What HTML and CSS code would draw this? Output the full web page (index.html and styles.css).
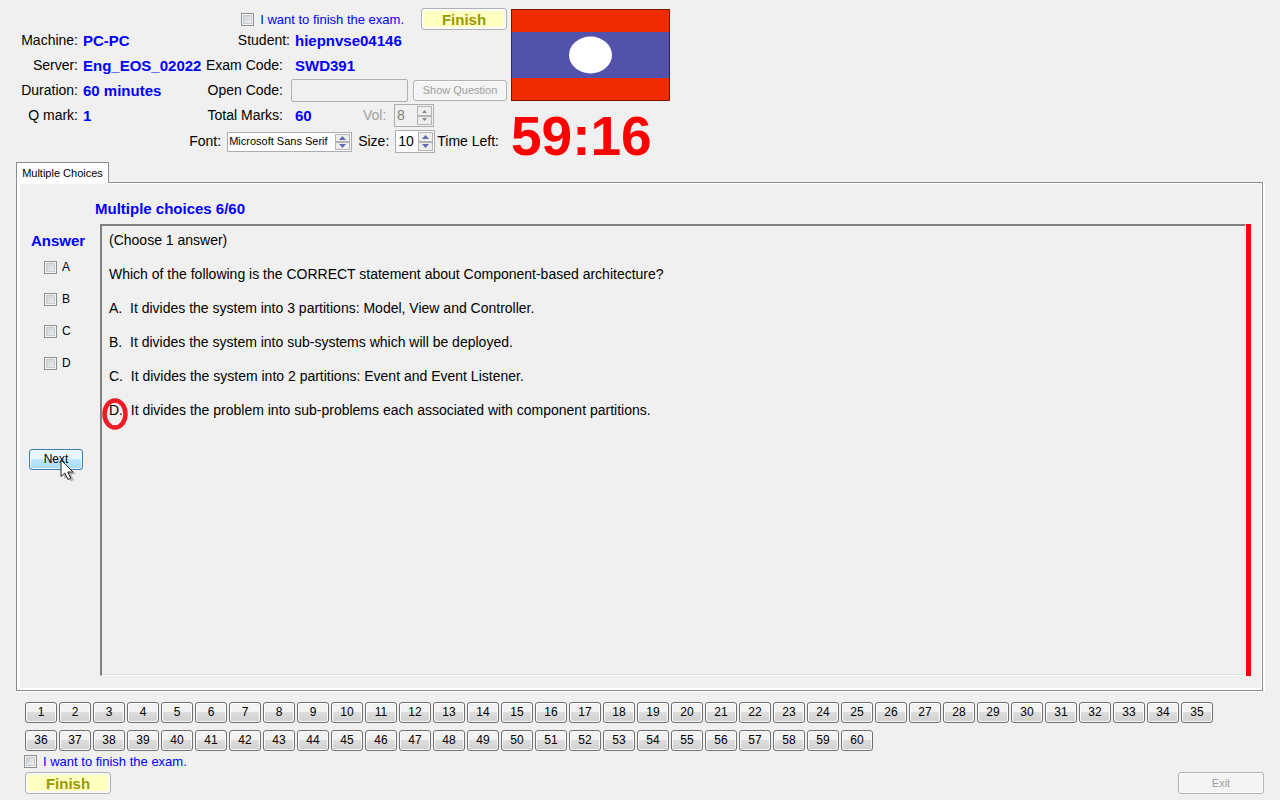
FILE: index.html
```html
<!DOCTYPE html>
<html lang="en">
<head>
<meta charset="utf-8">
<title>Exam</title>
<link rel="stylesheet" href="styles.css">
</head>
<body>
<header class="header">
  <div class="info">
    <div class="finish-line">
      <label class="confirm"><input class="check" type="checkbox"><span>I want to finish the exam.</span></label>
      <button class="btn btn-finish" type="button">Finish</button>
    </div>
    <div class="details">
      <span class="label">Machine:</span><span class="value">PC-PC</span>
      <span class="label">Student:</span><span class="value">hiepnvse04146</span>
      <span class="label">Server:</span><span class="value">Eng_EOS_02022</span>
      <span class="label label-inset">Exam Code:</span><span class="value">SWD391</span>
      <span class="label">Duration:</span><span class="value">60 minutes</span>
      <label class="label label-inset" for="open-code">Open Code:</label>
      <div class="open-code"><input class="code-input" id="open-code" type="text" disabled><button class="btn btn-show" type="button" disabled>Show Question</button></div>
      <span class="label">Q mark:</span><span class="value">1</span>
      <span class="label label-inset">Total Marks:</span>
      <div class="marks">
        <span class="value">60</span>
        <label class="muted" for="volume">Vol:</label>
        <div class="spinner spinner-off"><input id="volume" type="number" value="8" disabled><span class="steps"><button type="button" aria-label="Volume up" disabled><svg viewBox="0 0 7 4"><path d="M1 4L3.500 1L6 4Z"/></svg></button><button type="button" aria-label="Volume down" disabled><svg viewBox="0 0 7 4"><path d="M1 0L3.500 3L6 0Z"/></svg></button></span></div>
      </div>
    </div>
    <div class="font-line">
      <label for="font">Font:</label>
      <div class="spinner spinner-font"><input id="font" type="text" value="Microsoft Sans Serif"><span class="steps"><button type="button" aria-label="Previous font"><svg viewBox="0 0 7 4"><path d="M0 4L3.500 0L7 4Z"/></svg></button><button type="button" aria-label="Next font"><svg viewBox="0 0 7 4"><path d="M0 0L3.500 4L7 0Z"/></svg></button></span></div>
      <label for="size">Size:</label>
      <div class="spinner"><input id="size" type="number" value="10"><span class="steps"><button type="button" aria-label="Larger"><svg viewBox="0 0 7 4"><path d="M0 4L3.500 0L7 4Z"/></svg></button><button type="button" aria-label="Smaller"><svg viewBox="0 0 7 4"><path d="M0 0L3.500 4L7 0Z"/></svg></button></span></div>
      <span class="time-label">Time Left:</span>
    </div>
  </div>
  <div class="clock">
    <svg class="flag" viewBox="0 0 159 92" role="img" aria-label="Flag">
      <rect width="159" height="92" fill="#f02b00"/>
      <rect y="23" width="159" height="46" fill="#5352ab"/>
      <ellipse cx="79.500" cy="46" rx="21.500" ry="18.500" fill="#fff"/>
      <rect x=".5" y=".5" width="158" height="91" fill="none" stroke="#000" stroke-opacity=".5"/>
    </svg>
    <time class="time">59:16</time>
  </div>
</header>
<main class="exam">
  <div class="tabs" role="tablist"><button class="tab" type="button" role="tab" aria-selected="true">Multiple Choices</button></div>
  <section class="panel">
    <h1 class="title">Multiple choices 6/60</h1>
    <div class="work">
      <div class="answers">
        <h2 class="answer-title">Answer</h2>
        <label class="choice"><input class="check" type="checkbox"><span>A</span></label>
        <label class="choice"><input class="check" type="checkbox"><span>B</span></label>
        <label class="choice"><input class="check" type="checkbox"><span>C</span></label>
        <label class="choice"><input class="check" type="checkbox"><span>D</span></label>
        <div class="next-wrap">
          <button class="btn btn-next" type="button">Next</button>
          <svg class="pointer" viewBox="0 0 18 24" aria-hidden="true">
            <path d="M4 4V20L8 17L11 22.500L14 21L11 15.500L16 15Z" fill="#000" opacity=".25"/>
            <path d="M1 1V17.500L4.800 14L8 20.500L10.800 19.200L7.800 13H13Z" fill="#fff" stroke="#222" stroke-width="1"/>
          </svg>
        </div>
      </div>
      <article class="question">
        <p>(Choose 1 answer)</p>
        <p>Which of the following is the CORRECT statement about Component-based architecture?</p>
        <p>A.&nbsp; It divides the system into 3 partitions: Model, View and Controller.</p>
        <p>B.&nbsp; It divides the system into sub-systems which will be deployed.</p>
        <p>C.&nbsp; It divides the system into 2 partitions: Event and Event Listener.</p>
        <p class="marked">D.&nbsp; It divides the problem into sub-problems each associated with component partitions.<svg class="ring" viewBox="0 0 26 32" aria-hidden="true"><ellipse cx="13" cy="16" rx="10.500" ry="13.500" fill="none" stroke="#ed1c24" stroke-width="4.500"/></svg></p>
      </article>
      <div class="bar"></div>
    </div>
  </section>
</main>
<footer class="footer">
  <nav class="numbers" id="numbers" aria-label="Questions"></nav>
  <label class="confirm"><input class="check" type="checkbox"><span>I want to finish the exam.</span></label>
  <div class="actions">
    <button class="btn btn-finish" type="button">Finish</button>
    <button class="btn btn-exit" type="button" disabled>Exit</button>
  </div>
</footer>
<script src="app.js"></script>
</body>
</html>
```
FILE: styles.css
```css
* { box-sizing: border-box; }
body {
  margin: 0;
  min-height: 100vh;
  display: flex;
  flex-direction: column;
  background: #f0f0f0;
  color: #000;
  font: 14px/17px "Liberation Sans", Arial, sans-serif;
}
h1, h2, p { margin: 0; }
button, input { font: inherit; color: inherit; margin: 0; }

.header { display: flex; gap: 4px; padding-top: 8px; }
.info { width: 507px; }
.finish-line { display: flex; justify-content: flex-end; align-items: center; gap: 17px; }
.confirm { display: flex; align-items: center; gap: 6px; color: #00f; font-size: 13px; line-height: 17px; }
.check {
  appearance: none;
  flex: none;
  width: 13px;
  height: 13px;
  border: 1px solid #8e8f8f;
  background: linear-gradient(135deg, #c4c8ce, #f6f6f6);
  box-shadow: inset 0 0 0 1px #f4f4f4, inset 0 0 0 2px #c8ccd1;
}

.btn {
  display: block;
  padding: 0;
  border: 1px solid #707070;
  border-radius: 3px;
  box-shadow: inset 0 0 0 1px #fcfcfc;
  background: linear-gradient(#f2f2f2 0 45%, #dddddd 50%, #cfcfcf);
  font-size: 12px;
  line-height: 17px;
  text-align: center;
}
.btn:disabled { border-color: #adb2b5; background: #f4f4f4; color: #a0a0a0; }
.btn-finish {
  width: 86px;
  height: 22px;
  border-color: #adb2b5;
  background: #ffffc0;
  box-shadow: inset 0 0 0 2px #fafafa;
  color: #999900;
  font-size: 15px;
  font-weight: bold;
}
.btn-show { width: 94px; height: 21px; font-size: 11px; }
.btn-exit { width: 86px; height: 22px; font-size: 11px; }

.details {
  display: grid;
  grid-template-columns: 78px 127px 85px 1fr;
  grid-auto-rows: 21px;
  row-gap: 4px;
  align-items: center;
}
.label { text-align: right; white-space: nowrap; }
.label-inset { padding-right: 7px; }
.value { padding-left: 5px; color: #00f; font-size: 15px; font-weight: bold; white-space: nowrap; }
.open-code { display: flex; align-items: center; gap: 5px; padding-left: 1px; }
.code-input { width: 117px; height: 23px; border: 1px solid #adb2b5; border-radius: 2px; background: #f0f0f0; }
.marks { display: flex; align-items: center; }
.marks .value { width: 73px; }
.muted { width: 31px; color: #a0a0a0; }

.font-line { display: flex; align-items: center; justify-content: flex-end; gap: 6px; padding: 4px 8px 0 0; }
.time-label { margin-left: -4px; }
.spinner {
  display: flex;
  width: 40px;
  height: 23px;
  border: 1px solid #abadb3;
  background: #fff;
}
.spinner input {
  appearance: textfield;
  flex: 1;
  min-width: 0;
  padding: 0 0 0 2px;
  border: 0;
  background: none;
}
.spinner input::-webkit-inner-spin-button { appearance: none; margin: 0; }
.spinner-font { width: 125px; height: 20px; }
.spinner-font input { padding-left: 1px; font-size: 11px; }
.spinner-off { background: #f0f0f0; color: #808080; }
.steps { display: flex; flex-direction: column; width: 15px; margin: 1px; }
.steps button {
  flex: 1;
  display: flex;
  align-items: center;
  justify-content: center;
  min-height: 0;
  padding: 0;
  border: 1px solid #b4b4b4;
  background: #eee;
}
.steps svg { width: 7px; height: 4px; fill: #5a6db0; }
.spinner-off svg { fill: #888; }

.clock { display: flex; flex-direction: column; padding-top: 1px; }
.flag { display: block; width: 159px; height: 92px; }
.time { color: #f00; font-size: 55px; font-weight: bold; line-height: 60px; margin-top: 5px; }

.exam { flex: 1; display: flex; flex-direction: column; padding: 0 17px 0 16px; margin-top: -4px; }
.tabs { display: flex; }
.tab {
  position: relative;
  z-index: 1;
  width: 93px;
  height: 21px;
  margin-bottom: -1px;
  padding: 0;
  border: 1px solid #898c95;
  border-bottom: 0;
  background: #fff;
  font-size: 11px;
  white-space: nowrap;
}
.panel {
  flex: 1;
  display: flex;
  flex-direction: column;
  padding: 17px 11px 14px 12px;
  border: 1px solid #898c95;
  box-shadow: inset 3px 1px 0 #fff, inset -1px -2px 0 #fff, 2px 1px 0 #fff;
}
.title { padding-left: 66px; color: #00f; font-size: 15px; line-height: 18px; }
.work { flex: 1; display: flex; margin-top: 6px; }
.answers { width: 71px; padding-top: 8px; }
.answer-title { padding-left: 2px; color: #00f; font-size: 15px; line-height: 17px; }
.choice { display: flex; align-items: center; gap: 5px; height: 32px; padding-left: 15px; font-size: 12px; }
.answer-title + .choice { margin-top: 2px; }
.next-wrap { position: relative; width: 54px; margin-top: 70px; }
.btn-next {
  width: 54px;
  height: 21px;
  border-color: #3c7fb1;
  background: linear-gradient(#eaf6fd 0 45%, #bee6fd 50%, #a7d9f5);
  box-shadow: inset 0 0 0 1px #e8f6fd;
}
.pointer { position: absolute; left: 31px; top: 10px; width: 18px; height: 24px; }
.question {
  flex: 1;
  display: flex;
  flex-direction: column;
  gap: 17px;
  padding: 6px 7px;
  border: 2px solid;
  border-color: #808080 #fff #fff #808080;
  border-right-width: 1px;
  border-bottom-width: 1px;
  box-shadow: inset -1px -1px 0 #e3e3e3;
}
.marked { position: relative; }
.ring { position: absolute; left: -7px; top: -4px; width: 26px; height: 32px; }
.bar { width: 5px; background: #f00; }

.footer { padding: 11px 16px 6px 25px; }
.numbers { display: flex; flex-wrap: wrap; gap: 7px 2px; padding-right: 30px; }
.btn-number { width: 32px; height: 21px; }
.footer .confirm { height: 21px; margin-left: -1px; }
.actions { display: flex; justify-content: space-between; }
```
FILE: app.js
```js
const numbers = document.getElementById("numbers");
for (let n = 1; n <= 60; n += 1) {
  const button = document.createElement("button");
  button.type = "button";
  button.className = "btn btn-number";
  button.textContent = n;
  numbers.append(button);
}
```
